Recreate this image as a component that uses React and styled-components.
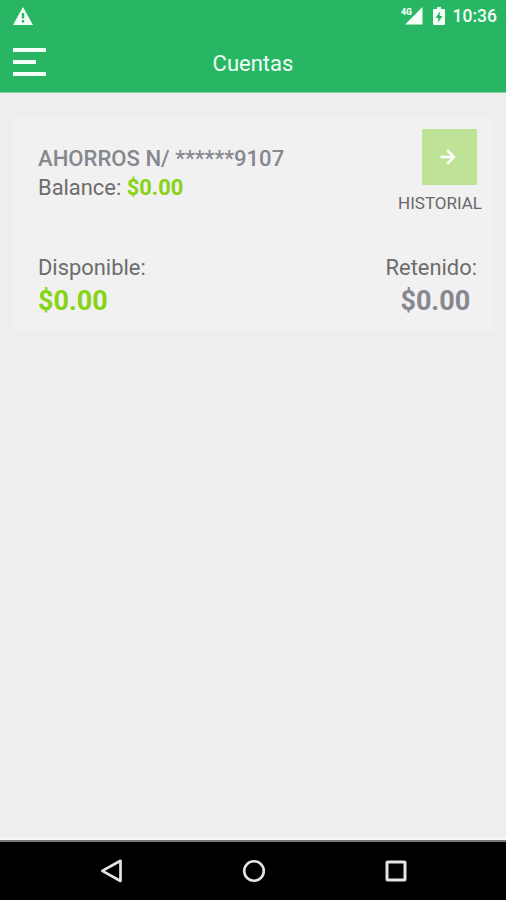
import React from 'react';
import styled, { createGlobalStyle } from 'styled-components';

const GlobalStyle = createGlobalStyle`
  body {
    margin: 0;
    background: #eeeeee;
    font-family: Roboto, sans-serif;
  }

  svg {
    display: block;
  }
`;

const Screen = styled.div`
  display: flex;
  flex-direction: column;
  width: 506px;
  height: 900px;
  background: #eeeeee;
`;

const StatusBar = styled.div`
  display: flex;
  align-items: center;
  justify-content: space-between;
  height: 32px;
  padding: 0 9px 0 13px;
  box-sizing: border-box;
  background: #29b664;
`;

const StatusIcons = styled.div`
  display: flex;
  align-items: center;
`;

const BatterySlot = styled.div`
  margin-left: 10px;
`;

const Clock = styled.span`
  margin-left: 8px;
  color: #f4fff8;
  font-size: 17.5px;
  font-weight: 500;
  line-height: 32px;
`;

const Toolbar = styled.header`
  display: grid;
  grid-template-columns: 1fr auto 1fr;
  align-items: center;
  height: 61px;
  padding: 0 13px;
  box-sizing: border-box;
  background: #29b664;
  border-bottom: 1px solid #7fcfa0;
`;

const Title = styled.h1`
  margin: 0;
  padding-top: 3px;
  color: #effff5;
  font-size: 22px;
  font-weight: 400;
  line-height: 30px;
`;

const MenuButton = styled.button`
  display: flex;
  flex-direction: column;
  justify-content: space-between;
  width: 33px;
  height: 28px;
  padding: 0;
  border: none;
  background: none;
`;

const MenuLine = styled.span`
  width: ${props => (props.$short ? '23px' : '33px')};
  height: 4px;
  background: #f3fff7;
`;

const Content = styled.main`
  flex: 1;
  padding: 25px 13px 0;
  border-bottom: 3px solid #f6f6f6;
`;

const Card = styled.section`
  display: flex;
  flex-direction: column;
  justify-content: space-between;
  height: 214px;
  padding: 11px 11px 14px 25px;
  box-sizing: border-box;
  background: #f1f1f1;
`;

const CardRow = styled.div`
  display: flex;
  justify-content: space-between;
`;

const AccountInfo = styled.div`
  padding-top: 14px;
`;

const AccountName = styled.div`
  color: #85888f;
  font-size: 22.1px;
  font-weight: 500;
  line-height: 30px;
`;

const Label = styled.div`
  color: #6c6c6c;
  font-size: 21.9px;
  line-height: 30px;
`;

const Balance = styled.span`
  color: #86d317;
  font-weight: 700;
`;

const HistoryLink = styled.div`
  display: flex;
  flex-direction: column;
  align-items: center;
`;

const HistoryButton = styled.button`
  display: flex;
  align-items: center;
  justify-content: center;
  width: 55px;
  height: 56px;
  margin-left: 18px;
  padding: 0 3px 0 0;
  box-sizing: border-box;
  border: none;
  border-radius: 1px;
  background: #bee296;
`;

const HistoryLabel = styled.span`
  margin-top: 8px;
  color: #686868;
  font-size: 17px;
  line-height: 20px;
`;

const Column = styled.div`
  display: flex;
  flex-direction: column;
  align-items: ${props => (props.$end ? 'center' : 'flex-start')};
  margin-right: ${props => (props.$end ? '5px' : '0')};
`;

const Amount = styled.div`
  margin-top: 1px;
  margin-left: ${props => (props.$muted ? '8px' : '0')};
  color: ${props => (props.$muted ? '#85888f' : '#86d317')};
  font-size: 27px;
  font-weight: 700;
  line-height: 34px;
`;

const NavBar = styled.nav`
  display: flex;
  align-items: center;
  justify-content: space-between;
  height: 60px;
  padding: 0 99px 0 100px;
  box-sizing: border-box;
  background: #000;
  border-top: 2px solid #777;
`;

const WarningIcon = () => (
  <svg width="20" height="18" viewBox="0 0 20 18">
    <path d="M10 0L20 18H0Z" fill="#f4fff8" />
    <path d="M8.8 6h2.4v5.5H8.8zM8.8 13h2.4v2.4H8.8z" fill="#29b664" />
  </svg>
);

const SignalIcon = () => (
  <svg width="22" height="18" viewBox="0 0 22 18">
    <path d="M21.5 0V17.5H4Z" fill="#f4fff8" />
    <path d="M0 0H12V8.5H0Z" fill="#29b664" />
    <text
      x="0"
      y="8"
      fontSize="9.5"
      fontWeight="900"
      textLength="11"
      lengthAdjust="spacingAndGlyphs"
      fill="#f4fff8"
    >
      4G
    </text>
  </svg>
);

const BatteryIcon = () => (
  <svg width="12" height="18" viewBox="0 0 12 18">
    <path d="M4 0h4v2h2.8q1.2 0 1.2 1.2v13.6q0 1.2-1.2 1.2H1.2Q0 18 0 16.8V3.2Q0 2 1.2 2H4z" fill="#f4fff8" />
    <path d="M6.8 4.5L2.6 11h2.7v4.5L9.4 9H6.8z" fill="#29b664" />
  </svg>
);

const ArrowIcon = () => (
  <svg width="16" height="16" viewBox="0 0 16 16" fill="none" stroke="#fff" strokeWidth="2.5">
    <path d="M0.5 8H14M7.2 1.2L14 8L7.2 14.8" />
  </svg>
);

const BackIcon = () => (
  <svg width="23" height="26" viewBox="0 0 23 26" fill="none" stroke="#e4e4e4" strokeWidth="2.7" strokeLinejoin="round">
    <path d="M20.5 2.8V23L2.3 12.9Z" />
  </svg>
);

const HomeIcon = () => (
  <svg width="24" height="24" viewBox="0 0 24 24" fill="none" stroke="#e4e4e4" strokeWidth="2.6">
    <circle cx="12" cy="12" r="9.8" />
  </svg>
);

const RecentsIcon = () => (
  <svg width="22" height="22" viewBox="0 0 22 22" fill="none" stroke="#e4e4e4" strokeWidth="3">
    <rect x="2" y="2" width="18" height="18" rx="0.6" />
  </svg>
);

const App = () => {
  return (
    <>
      <GlobalStyle />
      <Screen>
        <StatusBar>
          <WarningIcon />
          <StatusIcons>
            <SignalIcon />
            <BatterySlot>
              <BatteryIcon />
            </BatterySlot>
            <Clock>10:36</Clock>
          </StatusIcons>
        </StatusBar>
        <Toolbar>
          <MenuButton aria-label="Menú">
            <MenuLine />
            <MenuLine $short />
            <MenuLine />
          </MenuButton>
          <Title>Cuentas</Title>
        </Toolbar>
        <Content>
          <Card>
            <CardRow>
              <AccountInfo>
                <AccountName>AHORROS N/ ******9107</AccountName>
                <Label>Balance: <Balance>$0.00</Balance></Label>
              </AccountInfo>
              <HistoryLink>
                <HistoryButton aria-label="Historial">
                  <ArrowIcon />
                </HistoryButton>
                <HistoryLabel>HISTORIAL</HistoryLabel>
              </HistoryLink>
            </CardRow>
            <CardRow>
              <Column>
                <Label>Disponible:</Label>
                <Amount>$0.00</Amount>
              </Column>
              <Column $end>
                <Label>Retenido:</Label>
                <Amount $muted>$0.00</Amount>
              </Column>
            </CardRow>
          </Card>
        </Content>
        <NavBar>
          <BackIcon />
          <HomeIcon />
          <RecentsIcon />
        </NavBar>
      </Screen>
    </>
  );
};

export default App;
